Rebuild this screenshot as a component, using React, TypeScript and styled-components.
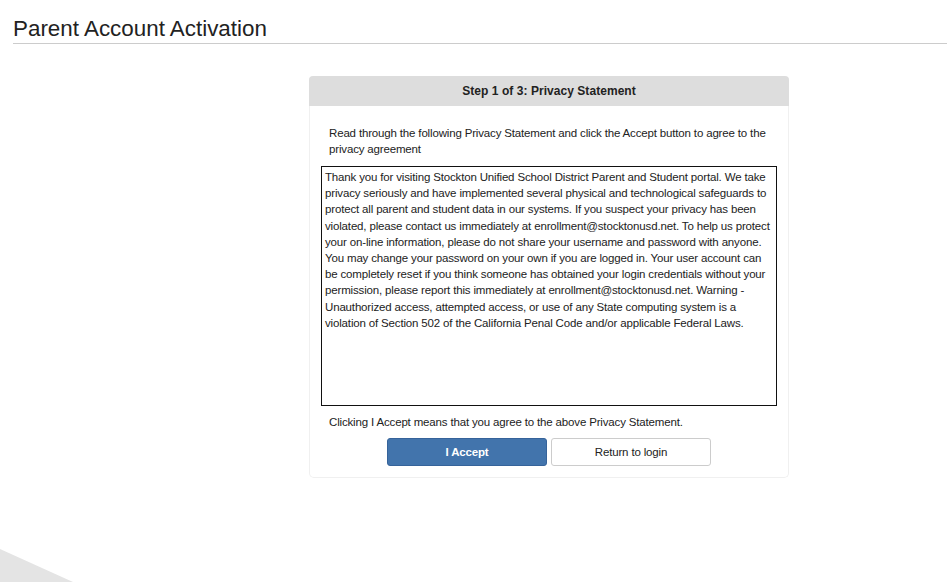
import React from "react";
import styled, { createGlobalStyle } from "styled-components";

const Global = createGlobalStyle`
  html, body { margin: 0; padding: 0; background: #fff; }
  body { font-family: "Liberation Sans", Arial, sans-serif; color: #222; overflow: hidden; }
  * { box-sizing: border-box; }
`;

const Page = styled.div`
  position: relative;
  width: 947px;
  height: 582px;
  overflow: hidden;
`;

const Title = styled.h1`
  margin: 17px 0 0 13px;
  padding: 0 0 2px 0;
  font-size: 22.4px;
  line-height: 24px;
  font-weight: normal;
  color: #222;
  border-bottom: 1px solid #cccccc;
`;

const Main = styled.div`
  padding: 32px 0 0 309px;
`;

const Panel = styled.section`
  width: 480px;
  border: 1px solid #f0f0f0;
  border-top: none;
  border-radius: 5px;
  padding-bottom: 11px;
`;

const PanelHeader = styled.div`
  height: 30px;
  margin: 0 -1px;
  background: #dddddd;
  border-radius: 4px 4px 0 0;
  display: flex;
  align-items: center;
  justify-content: center;
  font-size: 12px;
  letter-spacing: 0.05px;
  font-weight: bold;
  color: #222;
  padding-bottom: 1px;
`;

const Instruction = styled.p<{ $top: number }>`
  margin: ${(p) => p.$top}px 0 0 19px;
  width: 445px;
  font-size: 11.5px;
  letter-spacing: -0.16px;
  line-height: 16px;
  color: #222;
`;

const Statement = styled.textarea`
  display: block;
  margin: 9px 0 0 11px;
  width: 456px;
  height: 240px;
  border: 1px solid #111;
  padding: 2px 3px;
  resize: none;
  font-family: "Liberation Sans", Arial, sans-serif;
  font-size: 11.5px;
  letter-spacing: -0.16px;
  line-height: 16.2px;
  color: #222;
  overflow: hidden;
  outline: none;
`;

const Buttons = styled.div`
  display: flex;
  justify-content: center;
  gap: 4px;
  margin-top: 8px;
`;

const Button = styled.button<{ $primary?: boolean }>`
  width: 160px;
  height: 28px;
  border-radius: 3px;
  font-family: "Liberation Sans", Arial, sans-serif;
  font-size: 11.5px;
  letter-spacing: -0.16px;
  font-weight: ${(p) => (p.$primary ? "bold" : "normal")};
  color: ${(p) => (p.$primary ? "#fff" : "#222")};
  background: ${(p) => (p.$primary ? "#4274ac" : "#fff")};
  border: 1px solid ${(p) => (p.$primary ? "#36639a" : "#cccccc")};
  cursor: pointer;
`;

const Corner = styled.svg`
  position: absolute;
  left: 0;
  bottom: 0;
`;

const statement =
  "Thank you for visiting Stockton Unified School District Parent and Student portal. We take privacy seriously and have implemented several physical and technological safeguards to protect all parent and student data in our systems. If you suspect your privacy has been violated, please contact us immediately at enrollment@stocktonusd.net. To help us protect your on-line information, please do not share your username and password with anyone. You may change your password on your own if you are logged in. Your user account can be completely reset if you think someone has obtained your login credentials without your permission, please report this immediately at enrollment@stocktonusd.net. Warning - Unauthorized access, attempted access, or use of any State computing system is a violation of Section 502 of the California Penal Code and/or applicable Federal Laws.";

export default function App() {
  return (
    <Page>
      <Global />
      <Title>Parent Account Activation</Title>
      <Main>
        <Panel>
          <PanelHeader>Step 1 of 3: Privacy Statement</PanelHeader>
          <Instruction $top={19}>
            Read through the following Privacy Statement and click the Accept button to agree to the
            privacy agreement
          </Instruction>
          <Statement readOnly value={statement} />
          <Instruction $top={8}>Clicking I Accept means that you agree to the above Privacy Statement.</Instruction>
          <Buttons>
            <Button $primary>I Accept</Button>
            <Button>Return to login</Button>
          </Buttons>
        </Panel>
      </Main>
      <Corner width="120" height="40" viewBox="0 0 120 40">
        <polygon points="0,7 73,40 0,40" fill="#e4e4e4" />
      </Corner>
    </Page>
  );
}
